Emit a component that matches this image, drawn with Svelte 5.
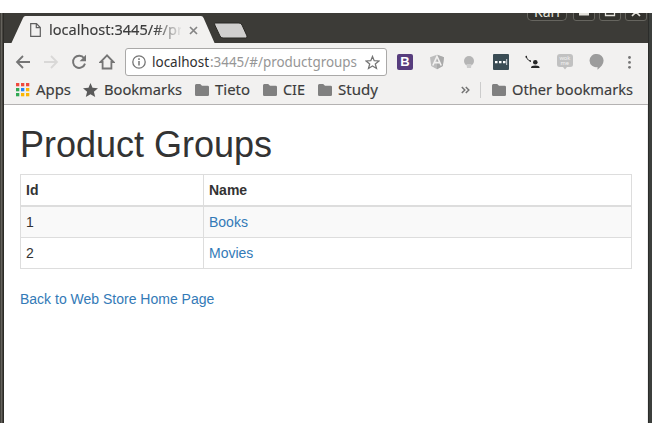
<script>
  const groups = [
    { id: 1, name: 'Books' },
    { id: 2, name: 'Movies' }
  ];
  const folders = [
    { name: 'Tieto', width: 35 },
    { name: 'CIE', width: 22 },
    { name: 'Study', width: 40 }
  ];
  const appColors = ['#f04a3e', '#f04a3e', '#f04a3e', '#31a853', '#2485f5', '#fbb605', '#31a853', '#fbb605', '#fbb605'];
</script>

{#snippet folder()}
  <svg class="folder" width="14" height="12" viewBox="0 0 14 12"><path d="M0 1.5Q0 0 1.3 0H5.2L7 1.8H12.7Q14 1.8 14 3V10.7Q14 12 12.7 12H1.3Q0 12 0 10.7Z" fill="#808080" /></svg>
{/snippet}

{#snippet label(text, width)}
  <svg class="label" {width} height="22"><text x="0" y="16" textLength={width} lengthAdjust="spacingAndGlyphs">{text}</text></svg>
{/snippet}

<div class="window">
  <header class="titlebar">
    <div class="tab">
      <svg class="shape" width="208" height="29" viewBox="0 0 208 29"><path d="M0 29V28H7L19 2Q19.8 0 21.5 0H197Q198.8 0 199.6 2L211 28V29Z" fill="#f2f1f0" /></svg>
      <svg class="page" width="11" height="14" viewBox="0 0 11 14"><path d="M.7.7H6.5L10.3 4.5V13.3H.7ZM6.3.8V4.7H10.2" fill="none" stroke="#5f5f5f" stroke-width="1.2" /></svg>
      <div class="tabtext"><svg width="132" height="22"><text x="0" y="16" textLength="134" lengthAdjust="spacingAndGlyphs">localhost:3445/#/pr</text></svg></div>
      <svg class="close" width="9" height="9" viewBox="0 0 9 9"><path d="M1 1L8 8M8 1L1 8" stroke="#858585" stroke-width="1.7" /></svg>
    </div>
    <svg class="newtab" width="34" height="17" viewBox="0 0 34 17"><path d="M1 1H25Q27 1 28 3L33 14Q33.5 16 31.5 16H9Q7 16 6 14L.8 3Q.2 1 1 1Z" fill="#d0cfce" stroke="#292824" /></svg>
    <div class="controls">
      <div class="user"><span>Kari</span></div>
      <svg width="22" height="9"><path d="M.5 0V5Q.5 7.5 3 7.5H19Q21.5 7.5 21.5 5V0" fill="#33322e" stroke="#66655f" /><rect x="6" y="0" width="10" height="2.5" fill="#e4e2dc" /></svg>
      <svg width="22" height="9"><path d="M.5 0V5Q.5 7.5 3 7.5H19Q21.5 7.5 21.5 5V0" fill="#33322e" stroke="#66655f" /><path d="M6.5 0V2.5H15.5V0" fill="none" stroke="#e4e2dc" stroke-width="1.3" /></svg>
      <svg width="22" height="9"><path d="M.5 0V5Q.5 7.5 3 7.5H19Q21.5 7.5 21.5 5V0" fill="#33322e" stroke="#66655f" /><path d="M7 3L11 -1L15 3" fill="none" stroke="#e4e2dc" stroke-width="1.7" /></svg>
    </div>
  </header>

  <div class="chrome">
    <div class="toolbar">
      <svg class="nav" width="16" height="16" viewBox="0 0 16 16"><path d="M15 8H2.2M8 2L2 8L8 14" fill="none" stroke="#757575" stroke-width="1.8" /></svg>
      <svg class="nav" width="16" height="16" viewBox="0 0 16 16"><path d="M1 8H13.8M8 2L14 8L8 14" fill="none" stroke="#d9d8d7" stroke-width="1.8" /></svg>
      <svg class="nav" width="16" height="16" viewBox="0 0 16 16"><path d="M13.1 4.2A6.1 6.1 0 1 0 14 9.6" fill="none" stroke="#757575" stroke-width="1.9" /><path d="M15 .8V7.2H8.6Z" fill="#757575" /></svg>
      <svg class="nav" width="16" height="16" viewBox="0 0 16 16"><path d="M8 1.4L1.6 8H3.6V14.5H12.4V8H14.4Z" fill="none" stroke="#757575" stroke-width="1.8" /></svg>
      <div class="address">
        <svg class="info" width="14" height="14" viewBox="0 0 14 14"><circle cx="7" cy="7" r="6.2" fill="none" stroke="#757575" stroke-width="1.3" /><path d="M7 6V10.5M7 3.3V4.9" stroke="#757575" stroke-width="1.5" /></svg>
        <svg class="url" width="206" height="22"><text x="0" y="16.5" textLength="57" lengthAdjust="spacingAndGlyphs" fill="#303030">localhost</text><text x="58" y="16.5" textLength="147" lengthAdjust="spacingAndGlyphs" fill="#969696">:3445/#/productgroups</text></svg>
        <svg class="fav" width="15" height="15" viewBox="0 0 15 15"><path d="M7.5 1.4L9.2 5.7L13.9 6L10.3 9L11.5 13.5L7.5 11L3.5 13.5L4.7 9L1.1 6L5.8 5.7Z" fill="none" stroke="#757575" stroke-width="1.25" /></svg>
      </div>
      <div class="extensions">
        <div class="ext bootstrap">B</div>
        <svg width="16" height="16" viewBox="0 0 16 16"><path d="M8 .8L15 3.3L13.8 12L8 15.2L2.2 12L1 3.3Z" fill="#bcbcbc" /><path d="M8 .8L15 3.3L13.8 12L8 15.2Z" fill="#aaa" /><path d="M3.8 11.5L8 2.5L12.2 11.5M5.7 8.6H10.3" fill="none" stroke="#f2f1f0" stroke-width="1.6" /></svg>
        <svg width="16" height="16" viewBox="0 0 16 16"><circle cx="8" cy="7" r="5" fill="#b5b5b5" /><path d="M5.5 10H10.5L10 14H6Z" fill="#cdcdcd" /></svg>
        <svg width="16" height="16" viewBox="0 0 16 16"><rect width="16" height="16" rx="1" fill="#3a4c54" /><path d="M2 7H4.5V9.3H2ZM6 7H8.5V9.3H6ZM10 7H12.5V9.3H10Z" fill="#fff" /><path d="M13.7 5V11" stroke="#d5dbdf" /></svg>
        <svg width="16" height="16" viewBox="0 0 16 16"><path d="M1.3 2.5Q1.6 5.9 5.2 7" fill="none" stroke="#272727" stroke-width=".9" /><path d="M.5 2L2 1.8V3.8L.8 4ZM4.3 6.4L6 6.3V7.9L4.5 7.6Z" fill="#272727" /><circle cx="10.3" cy="8.2" r="2.3" fill="#272727" /><path d="M6 14Q6 11.6 10.3 11.6T14.6 14Z" fill="#272727" /></svg>
        <svg width="16" height="16" viewBox="0 0 16 16"><path d="M3 0H13Q16 0 16 3V10.5Q16 13 13 13H10L8 15.5L6 13H3Q0 13 0 10.5V3Q0 0 3 0Z" fill="#c1c1c1" /><text class="wok" x="2.4" y="6.3" textLength="11" lengthAdjust="spacingAndGlyphs">wok</text><text class="wok" x="3.5" y="11" textLength="8.5" lengthAdjust="spacingAndGlyphs">me</text></svg>
        <svg width="16" height="16" viewBox="0 0 16 16"><path d="M8 0A6.6 6.6 0 0 1 14.6 6.6C14.6 10.2 12 13 8.5 15.7V13A6.6 6.6 0 1 1 8 0Z" fill="#9c9c9c" /></svg>
        <svg width="16" height="16" viewBox="0 0 16 16"><g fill="#757575"><circle cx="8.5" cy="3.5" r="1.4" /><circle cx="8.5" cy="8.4" r="1.4" /><circle cx="8.5" cy="13.3" r="1.4" /></g></svg>
      </div>
    </div>
    <nav class="bookmarks">
      <svg class="apps" width="14" height="14">{#each appColors as color, i}<rect x={(i % 3) * 5} y={Math.floor(i / 3) * 5} width="3.3" height="3.3" fill={color} />{/each}</svg>
      {@render label('Apps', 35)}
      <svg class="star" width="15" height="14" viewBox="0 0 15 14"><path d="M7.5 0L9.5 4.7L15 5.2L10.9 8.7L12.2 14L7.5 11.2L2.8 14L4.1 8.7L0 5.2L5.5 4.7Z" fill="#5a5a5a" /></svg>
      {@render label('Bookmarks', 78)}
      {#each folders as item}
        <div class="bookmark">{@render folder()}{@render label(item.name, item.width)}</div>
      {/each}
      <div class="other">
        <svg class="more" width="9" height="8" viewBox="0 0 9 8"><path d="M.8 1L3.8 4L.8 7M4.8 1L7.8 4L4.8 7" fill="none" stroke="#747474" stroke-width="1.5" /></svg>
        <i></i>
        {@render folder()}{@render label('Other bookmarks', 121)}
      </div>
    </nav>
  </div>

  <main>
    <h1>Product Groups</h1>
    <table>
      <thead><tr><th class="id">Id</th><th>Name</th></tr></thead>
      <tbody>
        {#each groups as group}
          <tr><td class="id">{group.id}</td><td><a href="#/productgroups">{group.name}</a></td></tr>
        {/each}
      </tbody>
    </table>
    <a class="back" href="#/">Back to Web Store Home Page</a>
  </main>
</div>

<style>
  :global(body) { margin: 0; background: #fff; }
  * { box-sizing: border-box; }
  svg { display: block; flex: none; }
  .window {
    width: 652px; height: 410px; margin-top: 13px; padding: 0 4px;
    background: linear-gradient(90deg, #44423d 0 1px, #65635d 1px 2px, #45433e 2px 3px, #2c2b27 3px 4px, #3c3b37 4px 648px, #2b2c2a 648px 649px, #3c3f3c 649px);
    overflow: hidden; font-family: "Noto Sans", sans-serif;
  }
  .titlebar { height: 30px; display: flex; align-items: flex-start; background: #3c3b37; }
  .tab { position: relative; width: 208px; height: 30px; display: flex; padding-left: 26px; }
  .shape { position: absolute; left: 0; top: 3px; overflow: visible; }
  .page, .close, .tabtext { position: relative; }
  .page { margin-top: 10px; }
  .tabtext { width: 132px; margin: 6px 8px 0; overflow: hidden; -webkit-mask-image: linear-gradient(90deg, #000 105px, transparent 134px); mask-image: linear-gradient(90deg, #000 105px, transparent 134px); }
  .tabtext text, .label text { font-size: 14.5px; fill: #3c3c3c; stroke: #3c3c3c; stroke-width: .15px; }
  .close { margin-top: 13px; }
  .newtab { margin: 9px 0 0 2px; }
  .controls { margin-left: auto; display: flex; gap: 4px; padding-right: 1px; }
  .user { width: 40px; height: 8px; margin-right: 2px; border: 1px solid #66655f; border-top: 0; border-radius: 0 0 5px 5px; background: #33322e; overflow: hidden; color: #e4e2dc; font-size: 14px; line-height: 16px; display: flex; justify-content: center; align-items: flex-end; }
  .user span { height: 16px; }
  .chrome { height: 62px; background: #f2f1f0; border-bottom: 1px solid #b4b2b2; }
  .toolbar { display: flex; align-items: flex-start; height: 35px; padding: 5px 9px 0 11px; }
  .nav { margin: 6px 12px 0 0; }
  .address { width: 262px; height: 28px; margin-left: -2px; padding: 0 6px; display: flex; align-items: center; border: 1px solid #aaa9a8; border-radius: 3px; background: #fff; }
  .url { margin-left: 6px; margin-top: -2px; font-size: 14.5px; overflow: visible; }
  .fav { margin-left: 7px; }
  .extensions { display: flex; gap: 16px; margin: 6px 0 0 10px; }
  .wok { font-size: 4.5px; fill: #f3f3f3; }
  .ext { width: 16px; height: 16px; }
  .bootstrap { background: #573d7d; color: #fff; border-radius: 2px; font: bold 13px/16px "Liberation Sans", sans-serif; text-align: center; }
  .bookmarks { display: flex; align-items: center; height: 24px; padding: 0 15px 0 12px; }
  .apps { margin-right: 6px; }
  .star { margin: 0 6px 0 12px; }
  .label { overflow: visible; }
  .bookmark { display: flex; align-items: center; margin-left: 13px; }
  .folder { margin-right: 6px; }
  .other { margin-left: auto; display: flex; align-items: center; }
  .other i { width: 1px; height: 16px; background: #ccc; margin: 0 11px 0 10px; }
  main { height: 318px; background: #fff; border-right: 1px solid #eee; padding: 20px 15px 0 16px; font: 14px/20px "Liberation Sans", Arial, sans-serif; color: #333; }
  h1 { margin: 0 0 9px; font-size: 36px; line-height: 40px; font-weight: 500; }
  table { width: 612px; table-layout: fixed; border-collapse: separate; border-spacing: 0; border-top: 1px solid #ddd; border-left: 1px solid #ddd; }
  th, td { padding: 5px; text-align: left; border-right: 1px solid #ddd; border-bottom: 1px solid #ddd; }
  th { border-bottom-width: 2px; }
  .id { width: 183px; }
  tbody tr:nth-child(odd) { background: #f9f9f9; }
  a { color: #337ab7; text-decoration: none; }
  .back { display: block; margin-top: 20px; }
</style>
